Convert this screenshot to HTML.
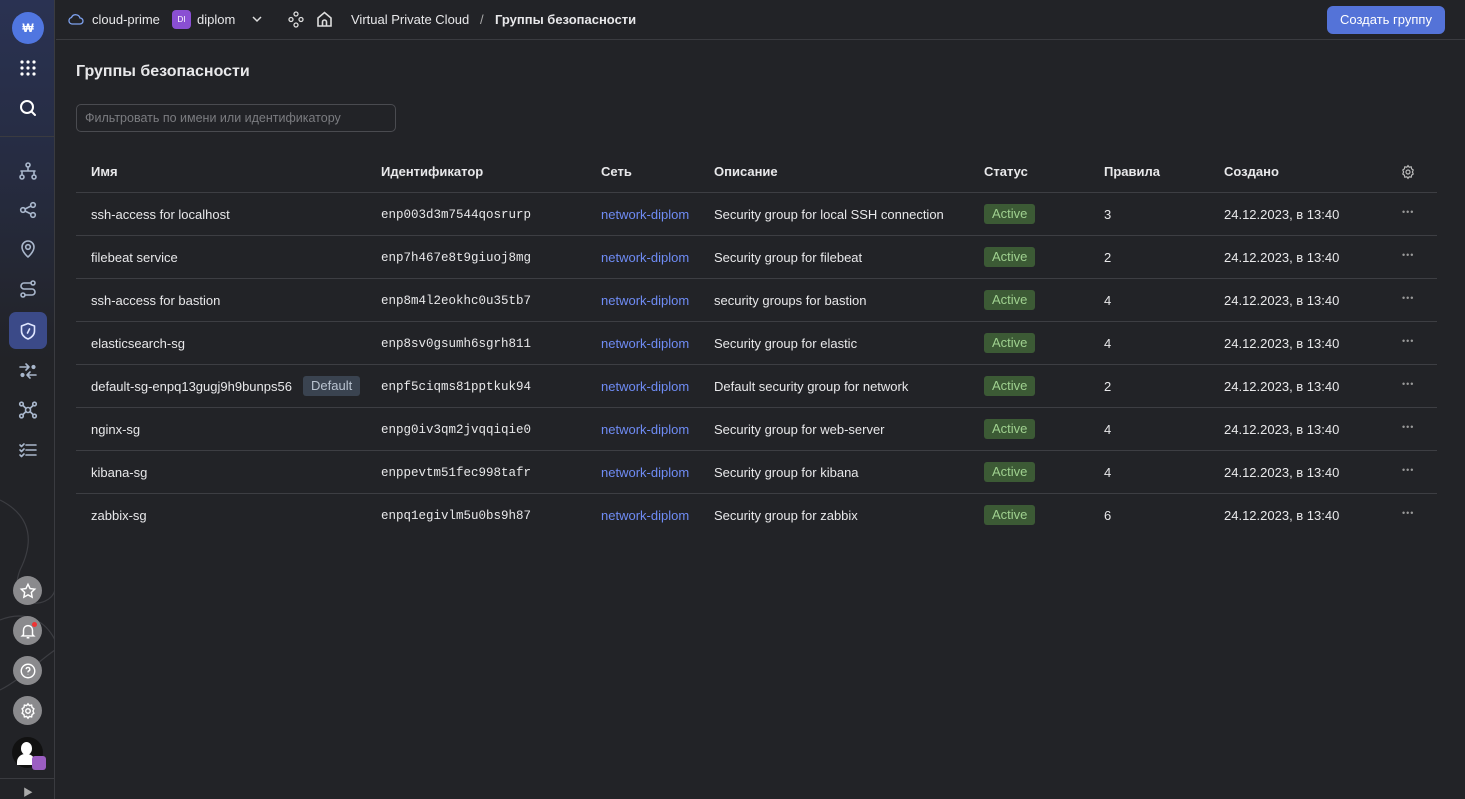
<!DOCTYPE html>
<html><head><meta charset="utf-8">
<style>
*{box-sizing:border-box;margin:0;padding:0}
body{width:1465px;height:799px;overflow:hidden;background:#222327;font-family:"Liberation Sans","Noto Sans CJK SC",sans-serif;color:#e8e8ea;font-size:13px;position:relative}
.sb{position:absolute;left:0;top:0;width:55px;height:799px;background:linear-gradient(180deg,#2a3252 0%,#262c42 20%,#222327 45%,#222327 100%);border-right:1px solid #3a3b40}
.ic{position:absolute;left:11px;width:33px;height:33px;display:flex;align-items:center;justify-content:center}
.ic svg{width:20px;height:20px;fill:none;stroke:#a9b7cc;stroke-width:1.6;stroke-linecap:round;stroke-linejoin:round}
.circ{position:absolute;left:13px;width:29px;height:29px;border-radius:50%;background:#8a8a8d;display:flex;align-items:center;justify-content:center}
.circ svg{width:18px;height:18px;fill:none;stroke:#fff;stroke-width:1.6}
.hdr{position:absolute;left:56px;top:0;right:0;height:40px;border-bottom:1px solid #3a3b40}
.t{position:absolute;white-space:nowrap}
.mono{font-family:"Liberation Mono",monospace;font-size:12.5px}
.row{position:absolute;left:76px;width:1361px;height:43px;border-bottom:1px solid #3d3e43}
.row .t{top:14px}
.row .t.mono{top:15px}
.badge{position:absolute;top:11px;height:20px;padding:0 8px;line-height:20px;background:#3c5a35;color:#9fd18f;border-radius:3px;font-size:13px}
.dots{position:absolute;left:1326px;top:14px;color:#999;font-size:9px;letter-spacing:1px}
.link{color:#6f8cf5}
</style></head><body>
<div class="sb">
  <div style="position:absolute;left:12px;top:12px;width:32px;height:32px;border-radius:50%;background:#5076e0;color:#fff;font-weight:bold;font-size:12px;text-align:center;line-height:32px">₩</div>
  <div class="ic" style="top:51px"><svg viewBox="0 0 20 20" style="fill:#fff;stroke:none"><circle cx="4" cy="4" r="1.6"/><circle cx="10" cy="4" r="1.6"/><circle cx="16" cy="4" r="1.6"/><circle cx="4" cy="10" r="1.6"/><circle cx="10" cy="10" r="1.6"/><circle cx="16" cy="10" r="1.6"/><circle cx="4" cy="16" r="1.6"/><circle cx="10" cy="16" r="1.6"/><circle cx="16" cy="16" r="1.6"/></svg></div>
  <div class="ic" style="top:91px"><svg viewBox="0 0 20 20" style="stroke:#fff;stroke-width:2"><circle cx="9" cy="9" r="6"/><path d="M13.5 13.5L17 17"/></svg></div>
  <div style="position:absolute;left:0;top:136px;width:55px;border-top:1px solid #3a3b40"></div>
  <div class="ic" style="top:154px"><svg viewBox="0 0 20 20"><circle cx="10" cy="4" r="2"/><circle cx="4" cy="16" r="2"/><circle cx="16" cy="16" r="2"/><path d="M10 6v4M3 10h14M4 10v4M16 10v4"/></svg></div>
  <div class="ic" style="top:193px"><svg viewBox="0 0 20 20"><circle cx="5" cy="10" r="2.3"/><circle cx="15" cy="5" r="2.3"/><circle cx="15" cy="15" r="2.3"/><path d="M7 9l6-3M7 11l6 3"/></svg></div>
  <div class="ic" style="top:232px"><svg viewBox="0 0 20 20"><path d="M10 18s6-5 6-10a6 6 0 0 0-12 0c0 5 6 10 6 10z"/><circle cx="10" cy="8" r="2.3"/></svg></div>
  <div class="ic" style="top:272px"><svg viewBox="0 0 20 20"><circle cx="15" cy="4" r="2"/><circle cx="5" cy="16" r="2"/><path d="M13 4H6a3 3 0 0 0 0 6h8a3 3 0 0 1 0 6H7"/></svg></div>
  <div style="position:absolute;left:9px;top:312px;width:38px;height:37px;border-radius:7px;background:#3b4a88"></div>
  <div class="ic" style="top:314px;left:11px"><svg viewBox="0 0 20 20" style="stroke:#dfe6ff"><path d="M10 2.5l6.5 2.5v5c0 4-3 6.5-6.5 8-3.5-1.5-6.5-4-6.5-8V5z"/><path d="M11.5 8l-2 4"/></svg></div>
  <div class="ic" style="top:354px"><svg viewBox="0 0 20 20"><path d="M2 6h9M8 3l3 3-3 3M18 14H9M12 11l-3 3 3 3"/><circle cx="15.5" cy="6" r="1.3" style="fill:#a9b7cc"/><circle cx="4.5" cy="14" r="1.3" style="fill:#a9b7cc"/></svg></div>
  <div class="ic" style="top:393px"><svg viewBox="0 0 20 20"><circle cx="10" cy="10" r="2.5"/><circle cx="3.5" cy="4" r="1.8"/><circle cx="16.5" cy="4" r="1.8"/><circle cx="3.5" cy="16" r="1.8"/><circle cx="16.5" cy="16" r="1.8"/><path d="M5 5.5l3 3M15 5.5l-3 3M5 14.5l3-3M15 14.5l-3-3"/></svg></div>
  <div class="ic" style="top:433px"><svg viewBox="0 0 20 20"><path d="M8 5h10M8 10h10M8 15h10M2 5l1.5 1.5L6 4M2 10l1.5 1.5L6 9M2 15l1.5 1.5L6 14"/></svg></div>
  <svg style="position:absolute;left:0;top:440px" width="55" height="300" viewBox="0 0 55 300" fill="none" stroke="#3c3d42" stroke-width="1.2"><path d="M0 60c20 10 40 30 20 70-15 40 30 40 35 20M0 180c25-10 45 0 55 20M0 250c20-10 40-30 55-40"/></svg>
  <div class="circ" style="top:576px"><svg viewBox="0 0 20 20"><path d="M10 2.5l2.3 4.8 5.2.7-3.8 3.6.9 5.2L10 14.3l-4.6 2.5.9-5.2L2.5 8l5.2-.7z"/></svg></div>
  <div class="circ" style="top:616px"><svg viewBox="0 0 20 20"><path d="M5 14V9a5 5 0 0 1 10 0v5l1.5 1.5h-13zM8.5 17.5h3"/></svg><div style="position:absolute;right:5px;top:6px;width:5px;height:5px;border-radius:50%;background:#e33"></div></div>
  <div class="circ" style="top:656px"><svg viewBox="0 0 20 20"><circle cx="10" cy="10" r="7.5"/><path d="M8 8a2 2 0 1 1 2.5 2c-.5.2-.5.7-.5 1.5M10 14v.3"/></svg></div>
  <div class="circ" style="top:696px"><svg viewBox="0 0 20 20"><circle cx="10" cy="10" r="2.5"/><path d="M10 2l1.5 2 2.5-.5.5 2.5 2 1.5-1 2.5 1 2.5-2 1.5-.5 2.5-2.5-.5L10 18l-1.5-2-2.5.5-.5-2.5-2-1.5 1-2.5-1-2.5 2-1.5.5-2.5 2.5.5z"/></svg></div>
  <div style="position:absolute;left:12px;top:737px;width:31px;height:31px;border-radius:50%;background:#111"><div style="position:absolute;left:9px;top:5px;width:11px;height:13px;border-radius:50%;background:#fff"></div><div style="position:absolute;left:5px;top:17px;width:18px;height:11px;border-radius:8px 8px 0 0;background:#fff"></div></div>
  <div style="position:absolute;left:32px;top:756px;width:14px;height:14px;border-radius:3px;background:#9b5ec2"></div>
  <div style="position:absolute;left:0;top:778px;width:55px;border-top:1px solid #3a3b40"></div>
  <div style="position:absolute;left:23px;top:784px;color:#aaa;font-size:10px">▶</div>
</div>

<div class="hdr">
  <svg style="position:absolute;left:12px;top:12px" width="16" height="14" viewBox="0 0 16 14" fill="none" stroke="#7ea2f0" stroke-width="1.3"><path d="M4 12h8a3 3 0 0 0 0-6 4.5 4.5 0 0 0-8.5-.5A3.3 3.3 0 0 0 4 12z"/></svg>
  <div class="t" style="left:36px;top:12px;font-size:13px">cloud-prime</div>
  <div style="position:absolute;left:116px;top:10px;width:19px;height:19px;border-radius:4px;background:#8a4fd3;color:#fff;font-size:8px;text-align:center;line-height:19px">DI</div>
  <div class="t" style="left:141px;top:12px;font-size:13px">diplom</div>
  <svg style="position:absolute;left:195px;top:15px" width="12" height="8" viewBox="0 0 12 8" fill="none" stroke="#ddd" stroke-width="1.5"><path d="M2 2l4 4 4-4"/></svg>
  <svg style="position:absolute;left:232px;top:11px" width="16" height="17" viewBox="0 0 16 17" fill="none" stroke="#ddd" stroke-width="1.3"><circle cx="8" cy="3" r="2"/><circle cx="3" cy="8.5" r="2"/><circle cx="13" cy="8.5" r="2"/><circle cx="8" cy="14" r="2"/></svg>
  <svg style="position:absolute;left:260px;top:10px" width="17" height="18" viewBox="0 0 17 18" fill="none" stroke="#ddd" stroke-width="1.6"><path d="M2 8l6.5-5.5L15 8v8H2z"/><path d="M6.5 16v-4a2 2 0 0 1 4 0v4"/></svg>
  <div class="t" style="left:295px;top:12px;font-size:13px">Virtual Private Cloud</div>
  <div class="t" style="left:424px;top:12px;font-size:13px;color:#aaa">/</div>
  <div class="t" style="left:439px;top:12px;font-size:13px;font-weight:bold">Группы безопасности</div>
  <div style="position:absolute;left:1271px;top:6px;width:118px;height:28px;border-radius:6px;background:#5473d8;color:#fff;font-size:13px;text-align:center;line-height:28px">Создать группу</div>
</div>

<div class="t" style="left:76px;top:63px;font-size:16px;font-weight:bold">Группы безопасности</div>
<div style="position:absolute;left:76px;top:104px;width:320px;height:28px;border:1px solid #4a4b50;border-radius:5px;color:#7b7c80;font-size:12.5px;line-height:26px;padding-left:8px">Фильтровать по имени или идентификатору</div>

<div class="row" style="top:150px;font-weight:bold">
  <div class="t" style="left:15px;top:14px">Имя</div>
  <div class="t" style="left:305px;top:14px">Идентификатор</div>
  <div class="t" style="left:525px;top:14px">Сеть</div>
  <div class="t" style="left:638px;top:14px">Описание</div>
  <div class="t" style="left:908px;top:14px">Статус</div>
  <div class="t" style="left:1028px;top:14px">Правила</div>
  <div class="t" style="left:1148px;top:14px">Создано</div>
  <svg style="position:absolute;left:1324px;top:14px" width="16" height="16" viewBox="0 0 20 20" fill="none" stroke="#bbb" stroke-width="1.5"><circle cx="10" cy="10" r="2.5"/><path d="M10 2l1.5 2 2.5-.5.5 2.5 2 1.5-1 2.5 1 2.5-2 1.5-.5 2.5-2.5-.5L10 18l-1.5-2-2.5.5-.5-2.5-2-1.5 1-2.5-1-2.5 2-1.5.5-2.5 2.5.5z"/></svg>
</div>

<div class="row" style="top:193px"><div class="t" style="left:15px">ssh-access for localhost</div><div class="t mono" style="left:305px">enp003d3m7544qosrurp</div><div class="t link" style="left:525px">network-diplom</div><div class="t" style="left:638px">Security group for local SSH connection</div><div class="badge" style="left:908px">Active</div><div class="t" style="left:1028px">3</div><div class="t" style="left:1148px">24.12.2023, в 13:40</div><div class="dots">•••</div></div>
<div class="row" style="top:236px"><div class="t" style="left:15px">filebeat service</div><div class="t mono" style="left:305px">enp7h467e8t9giuoj8mg</div><div class="t link" style="left:525px">network-diplom</div><div class="t" style="left:638px">Security group for filebeat</div><div class="badge" style="left:908px">Active</div><div class="t" style="left:1028px">2</div><div class="t" style="left:1148px">24.12.2023, в 13:40</div><div class="dots">•••</div></div>
<div class="row" style="top:279px"><div class="t" style="left:15px">ssh-access for bastion</div><div class="t mono" style="left:305px">enp8m4l2eokhc0u35tb7</div><div class="t link" style="left:525px">network-diplom</div><div class="t" style="left:638px">security groups for bastion</div><div class="badge" style="left:908px">Active</div><div class="t" style="left:1028px">4</div><div class="t" style="left:1148px">24.12.2023, в 13:40</div><div class="dots">•••</div></div>
<div class="row" style="top:322px"><div class="t" style="left:15px">elasticsearch-sg</div><div class="t mono" style="left:305px">enp8sv0gsumh6sgrh811</div><div class="t link" style="left:525px">network-diplom</div><div class="t" style="left:638px">Security group for elastic</div><div class="badge" style="left:908px">Active</div><div class="t" style="left:1028px">4</div><div class="t" style="left:1148px">24.12.2023, в 13:40</div><div class="dots">•••</div></div>
<div class="row" style="top:365px"><div class="t" style="left:15px">default-sg-enpq13gugj9h9bunps56</div><div style="position:absolute;left:227px;top:11px;height:20px;padding:0 8px;line-height:20px;background:#3a4350;color:#b9c3d0;border-radius:3px">Default</div><div class="t mono" style="left:305px">enpf5ciqms81pptkuk94</div><div class="t link" style="left:525px">network-diplom</div><div class="t" style="left:638px">Default security group for network</div><div class="badge" style="left:908px">Active</div><div class="t" style="left:1028px">2</div><div class="t" style="left:1148px">24.12.2023, в 13:40</div><div class="dots">•••</div></div>
<div class="row" style="top:408px"><div class="t" style="left:15px">nginx-sg</div><div class="t mono" style="left:305px">enpg0iv3qm2jvqqiqie0</div><div class="t link" style="left:525px">network-diplom</div><div class="t" style="left:638px">Security group for web-server</div><div class="badge" style="left:908px">Active</div><div class="t" style="left:1028px">4</div><div class="t" style="left:1148px">24.12.2023, в 13:40</div><div class="dots">•••</div></div>
<div class="row" style="top:451px"><div class="t" style="left:15px">kibana-sg</div><div class="t mono" style="left:305px">enppevtm51fec998tafr</div><div class="t link" style="left:525px">network-diplom</div><div class="t" style="left:638px">Security group for kibana</div><div class="badge" style="left:908px">Active</div><div class="t" style="left:1028px">4</div><div class="t" style="left:1148px">24.12.2023, в 13:40</div><div class="dots">•••</div></div>
<div class="row" style="top:494px;border-bottom:none"><div class="t" style="left:15px">zabbix-sg</div><div class="t mono" style="left:305px">enpq1egivlm5u0bs9h87</div><div class="t link" style="left:525px">network-diplom</div><div class="t" style="left:638px">Security group for zabbix</div><div class="badge" style="left:908px">Active</div><div class="t" style="left:1028px">6</div><div class="t" style="left:1148px">24.12.2023, в 13:40</div><div class="dots">•••</div></div>
</body></html>
